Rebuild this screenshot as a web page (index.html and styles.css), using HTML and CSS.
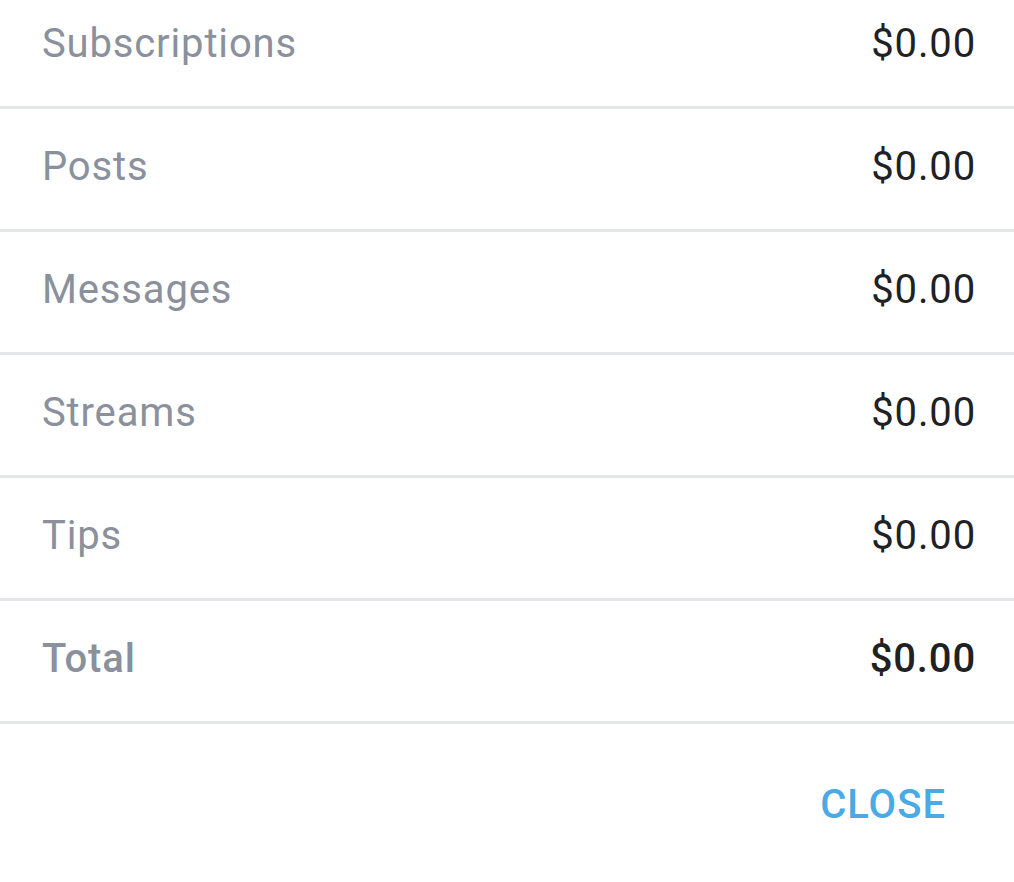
FILE: index.html
```html
<!DOCTYPE html>
<html>
<head>
<meta charset="utf-8">
<link rel="stylesheet" href="styles.css">
</head>
<body>
<div class="sheet">
  <div class="row"><span class="label">Subscriptions</span><span class="value">$0.00</span></div>
  <div class="row"><span class="label">Posts</span><span class="value">$0.00</span></div>
  <div class="row"><span class="label">Messages</span><span class="value">$0.00</span></div>
  <div class="row"><span class="label">Streams</span><span class="value">$0.00</span></div>
  <div class="row"><span class="label">Tips</span><span class="value">$0.00</span></div>
  <div class="row total"><span class="label">Total</span><span class="value">$0.00</span></div>
  <div class="actions"><button class="btn">CLOSE</button></div>
</div>
</body>
</html>
```
FILE: styles.css
```css
html, body {
  margin: 0;
  padding: 0;
  background: #ffffff;
}
body {
  font-family: Roboto, "Liberation Sans", sans-serif;
}
.sheet {
  margin-top: -14px;
}
.row {
  box-sizing: border-box;
  display: flex;
  justify-content: space-between;
  align-items: center;
  height: 123px;
  padding: 0 39px 6px 42px;
  border-bottom: 3px solid #e4e6ea;
  font-size: 40px;
  letter-spacing: 0.85px;
}
.label {
  color: #8a909c;
}
.value {
  color: #1f2124;
  margin-right: -1px;
}
.total .label,
.total .value {
  font-weight: 500;
}
.actions {
  display: flex;
  justify-content: flex-end;
  padding: 57px 68px 0 0;
}
.btn {
  background: none;
  border: none;
  padding: 0;
  font-family: Roboto, "Liberation Sans", sans-serif;
  font-size: 40px;
  font-weight: 500;
  color: #4ba9e6;
  letter-spacing: 1px;
}
```
